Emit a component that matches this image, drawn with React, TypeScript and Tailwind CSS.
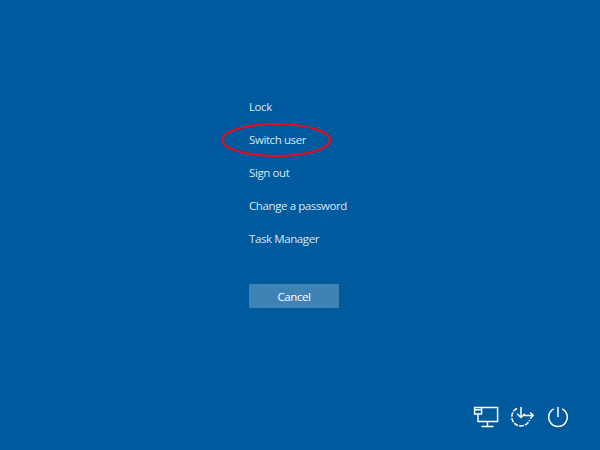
const menuItems = ["Lock", "Switch user", "Sign out", "Change a password", "Task Manager"];

function NetworkIcon() {
  return (
    <svg width="26" height="22" viewBox="0 0 26 22" fill="none" stroke="white" strokeWidth="1.5">
      <path d="M8.5 1.6H24.6V15.6H5V8" />
      <path d="M1.6 1.6H8.6V8H1.6Z" />
      <path d="M1.6 3.8H8.6" />
      <path d="M14.5 15.6V20.4M8.5 20.4H20.5" />
    </svg>
  );
}

function AccessIcon() {
  return (
    <svg width="26" height="22" viewBox="0 0 26 22" fill="none" stroke="white" strokeWidth="1.5">
      <path d="M7 2.5A9.2 9.2 0 1 0 19.6 14" strokeDasharray="4.5 1.2" />
      <path d="M11 1V11.5M7.2 7.8L11 11.5L14.8 7.8" />
      <path d="M14 9.5H23.2M20.2 6.5L23.2 9.5L20.2 12.5" />
    </svg>
  );
}

function PowerIcon() {
  return (
    <svg width="22" height="22" viewBox="0 0 22 22" fill="none" stroke="white" strokeWidth="1.5">
      <path d="M11 1V11" />
      <path d="M6.8 2.8A9.3 9.3 0 1 0 15.2 2.8" />
    </svg>
  );
}

export default function App() {
  return (
    <div className="flex h-[450px] w-[600px] flex-col overflow-hidden bg-[#005a9e] font-['Open_Sans',sans-serif] text-[11.5px] tracking-[-0.4px] text-[#d9e8f3]">
      <div className="ml-[249px] flex flex-col pt-[90px]">
        {menuItems.map((item) => (
          <div key={item} className="relative flex h-[33px] items-center whitespace-nowrap">
            <span>{item}</span>
            {item === "Switch user" && (
              <svg
                className="absolute left-[-29px] top-[-1px]"
                width="112"
                height="36"
                viewBox="0 0 112 36"
                fill="none"
              >
                <ellipse cx="56" cy="18" rx="54" ry="16" stroke="#e30e22" strokeWidth="2.2" />
              </svg>
            )}
          </div>
        ))}
        <button className="mt-[29px] h-[24px] w-[90px] bg-[#3f83b6] pt-[1px] text-white">Cancel</button>
      </div>
      <div className="mt-auto mb-[22px] mr-[31px] flex items-end justify-end gap-[11px]">
        <NetworkIcon />
        <AccessIcon />
        <PowerIcon />
      </div>
    </div>
  );
}
